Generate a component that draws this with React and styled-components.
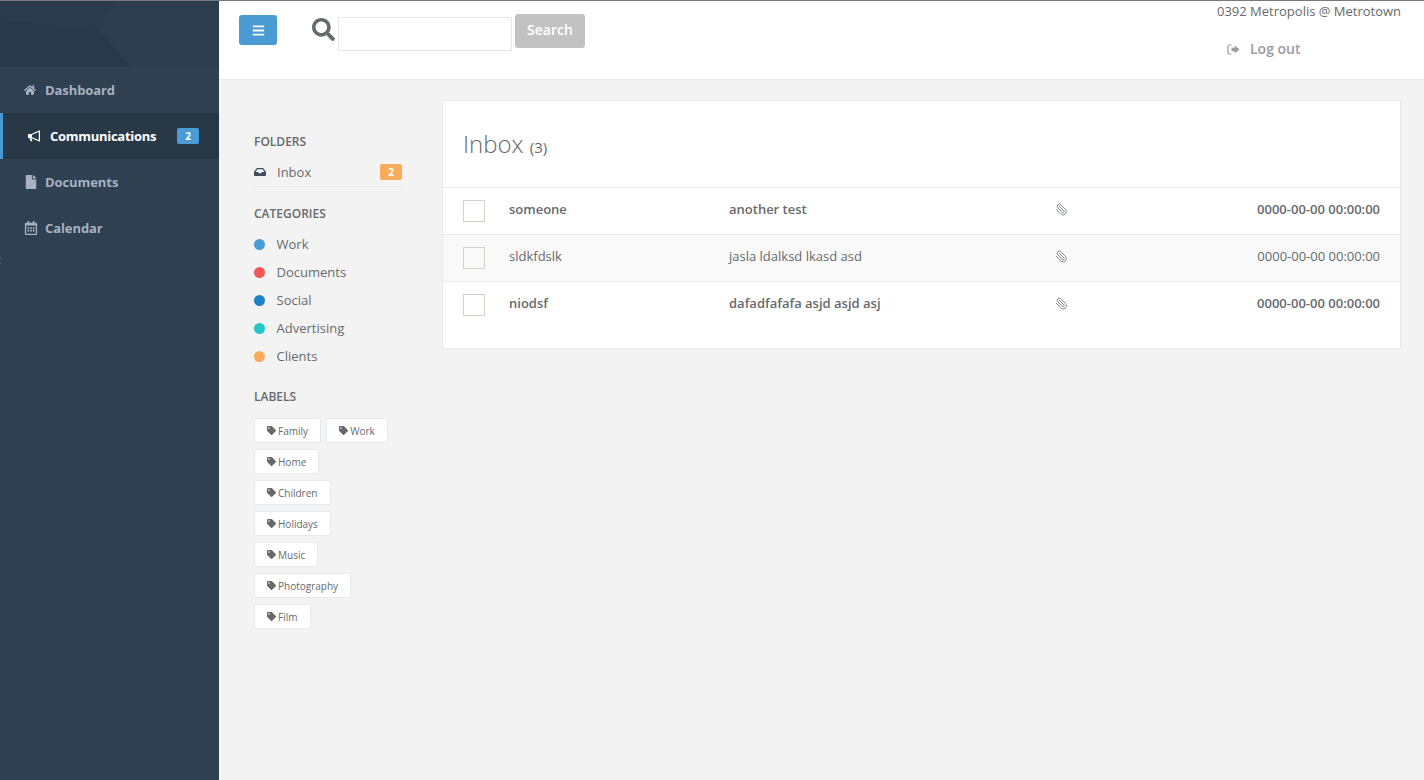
import React from "react"
import styled, { createGlobalStyle } from "styled-components"
import { FaBars, FaFile, FaHome, FaInbox, FaRegCalendarAlt, FaSearch, FaTag } from "react-icons/fa"
import { Paperclip } from "lucide-react"

const GlobalStyle = createGlobalStyle`
  html, body {
    margin: 0;
    padding: 0;
    height: 780px;
    overflow: hidden;
    background: #f3f3f3;
    font-family: "Open Sans", "Liberation Sans", sans-serif;
    color: #676a6c;
  }
  * {
    box-sizing: border-box;
  }
`

const Page = styled.div`
  display: flex;
  height: 780px;
  border-top: 1px solid #7a7a7a;
`

const Sidebar = styled.aside`
  position: relative;
  flex: 0 0 219px;
  background: #2f4050;
`

const Brand = styled.div`
  height: 66px;
  background: #293a4a;
  svg {
    display: block;
  }
`

const CollapseMark = styled.span`
  position: absolute;
  left: -2px;
  top: 257px;
  width: 5px;
  height: 5px;
  border-left: 1px solid #7e8ea0;
  border-bottom: 1px solid #7e8ea0;
  transform: rotate(45deg);
  opacity: 0.6;
`

const NavItem = styled.a`
  display: flex;
  align-items: center;
  height: 46px;
  padding-left: ${p => (p.$active ? "25px" : "24px")};
  border-left: ${p => (p.$active ? "3px solid #4a9ad4" : "0")};
  background: ${p => (p.$active ? "#293846" : "transparent")};
  color: ${p => (p.$active ? "#fff" : "#a7b1c2")};
  font-size: 13px;
  font-weight: 700;
  letter-spacing: ${p => (p.$active ? "-0.28px" : "-0.08px")};
`

const NavIcon = styled.span`
  display: flex;
  width: ${p => p.$width}px;
  font-size: ${p => p.$size}px;
  svg {
    display: block;
  }
`

const NavBadge = styled.span`
  margin-left: auto;
  margin-right: 20px;
  width: 22px;
  height: 16px;
  border-radius: 2px;
  background: #4a9ad4;
  color: #fff;
  font-size: 10px;
  line-height: 16px;
  letter-spacing: 0;
  text-align: center;
`

const Main = styled.div`
  flex: 1;
  display: flex;
  flex-direction: column;
`

const TopBar = styled.header`
  display: flex;
  height: 79px;
  background: #fff;
  border-bottom: 1px solid #e7eaec;
`

const MenuButton = styled.button`
  display: flex;
  align-items: center;
  justify-content: center;
  width: 38px;
  height: 30px;
  margin: 14px 0 0 20px;
  padding: 0;
  border: 0;
  border-radius: 3px;
  background: #4a9ad4;
  color: #fff;
  font-size: 13px;
`

const SearchForm = styled.form`
  display: flex;
  align-items: flex-start;
  margin: 13px 0 0 35px;
  color: #676a6c;
  svg {
    margin-top: 4px;
    font-size: 23px;
  }
`

const SearchInput = styled.input`
  width: 174px;
  height: 34px;
  margin: 3px 3px 0 3px;
  border: 1px solid #e5e6e7;
  background: #fff;
`

const SearchButton = styled.button`
  width: 70px;
  height: 34px;
  padding: 0 0 3px;
  border: 0;
  border-radius: 3px;
  background: #c2c2c2;
  color: #fff;
  font-family: inherit;
  font-size: 14px;
  font-weight: 600;
`

const UserBox = styled.div`
  margin-left: auto;
  display: flex;
  flex-direction: column;
  width: 207px;
`

const UserName = styled.div`
  margin-top: 1px;
  padding-right: 23px;
  font-size: 13px;
  line-height: 18px;
  text-align: right;
  white-space: nowrap;
`

const LogOut = styled.a`
  display: flex;
  align-items: center;
  gap: 10px;
  margin: 19px 0 0 10px;
  color: #999c9e;
  font-size: 14px;
  font-weight: 600;
  line-height: 20px;
`

const Content = styled.div`
  flex: 1;
  display: flex;
  align-items: flex-start;
  padding: 20px 23px 0 35px;
`

const Folders = styled.nav`
  flex: 0 0 148px;
  margin-right: 40px;
  padding-top: 34px;
`

const SectionTitle = styled.h5`
  margin: 0;
  font-size: 12px;
  font-weight: 600;
  line-height: 16px;
  text-transform: uppercase;
`

const FolderRow = styled.div`
  display: flex;
  align-items: center;
  height: 26px;
  margin: 11px 0 19px;
  border-bottom: 1px solid #e7eaec;
  padding-bottom: 3px;
  font-size: 13px;
  svg {
    margin-right: 11px;
    color: #3e4d5c;
    font-size: 12px;
  }
`

const FolderBadge = styled.span`
  margin-left: auto;
  width: 22px;
  height: 16px;
  border-radius: 2px;
  background: #f8ac59;
  color: #fff;
  font-size: 10px;
  font-weight: 700;
  line-height: 16px;
  text-align: center;
`

const CategoryList = styled.ul`
  margin: 8px 0 19px;
  padding: 0;
  list-style: none;
`

const CategoryRow = styled.li`
  display: flex;
  align-items: center;
  gap: 11.5px;
  height: 28px;
  font-size: 13px;
`

const Dot = styled.span`
  width: 11px;
  height: 11px;
  border-radius: 50%;
  background: ${p => p.$color};
`

const Tags = styled.div`
  display: flex;
  flex-direction: column;
  gap: 6px;
  margin-top: 13px;
`

const TagRow = styled.div`
  display: flex;
  gap: 5px;
`

const TagChip = styled.a`
  display: flex;
  align-items: center;
  gap: 2px;
  height: 25px;
  padding: 0 12.2px 0 12px;
  border: 1px solid #e7eaec;
  border-radius: 2px;
  background: #fff;
  font-size: 10px;
  svg {
    font-size: 9px;
  }
`

const MailBox = styled.section`
  flex: 1;
  height: 249px;
  background: #fff;
  border: 1px solid #e7eaec;
`

const MailHeader = styled.div`
  height: 87px;
  padding: 26px 20px 0;
  border-bottom: 1px solid #e7eaec;
`

const MailTitle = styled.h2`
  margin: 0;
  font-size: 24px;
  font-weight: 300;
  line-height: 34px;
  small {
    font-size: 15px;
    font-weight: 400;
    color: #676a6c;
  }
`

const MailRow = styled.div`
  display: grid;
  grid-template-columns: 22px 220px 327px 1fr 200px;
  align-items: center;
  height: 47px;
  padding: 0 20px;
  border-bottom: 1px solid ${p => (p.$last ? "transparent" : "#e7eaec")};
  background: ${p => (p.$read ? "#f9f9f9" : "#fff")};
  font-size: 13px;
  font-weight: ${p => (p.$read ? 400 : 600)};
`

const Check = styled.span`
  width: 22px;
  height: 22px;
  border: 1px solid #d5d0c9;
  background: ${p => (p.$read ? "#f9f9f9" : "#fff")};
`

const Sender = styled.span`
  padding: 0 0 5px 24px;
  margin-right: -24px;
`

const Subject = styled.span`
  padding: 0 0 5px 24px;
`

const Clip = styled.span`
  display: flex;
  padding: 0 0 4px 23px;
  color: #808486;
  svg {
    transform: scaleX(-1);
  }
`

const MailDate = styled.span`
  padding-bottom: 5px;
  text-align: right;
`

const BrandShape = () => (
  <svg width="219" height="66" viewBox="0 0 219 66">
    <polygon points="0,0 116,0 98,28 130,66 0,66" fill="#2a3b4b" />
    <polygon points="116,0 219,0 219,66 130,66 98,28" fill="#2c3d4e" />
    <polygon points="0,20 98,28 130,66 0,66" fill="#283949" />
  </svg>
)

const BullhornIcon = () => (
  <svg width="13" height="12" viewBox="0 0 13 12" fill="none">
    <path d="M0 4h4v4H0z M1.5 8h2l.8 3.2H2.5z" fill="#fff" />
    <path d="M4 4.2 11.4 1v10L4 7.8" stroke="#fff" strokeWidth="1.2" strokeLinejoin="round" />
  </svg>
)

const SignOutIcon = () => (
  <svg width="13" height="11" viewBox="0 0 13 11" fill="none">
    <path d="M4.5 1H2.2C1.5 1 1 1.5 1 2.2v6.6C1 9.5 1.5 10 2.2 10h2.3" stroke="#999c9e" strokeWidth="1.2" />
    <path d="M4.5 3.8h3.2V1.4L12.5 5.5 7.7 9.6V7.2H4.5z" fill="#999c9e" />
  </svg>
)

const navItems = [
  { label: "Dashboard", icon: <FaHome />, width: 21, size: 12 },
  { label: "Communications", icon: <BullhornIcon />, width: 22, size: 12, active: true, badge: 2 },
  { label: "Documents", icon: <FaFile />, width: 21, size: 14 },
  { label: "Calendar", icon: <FaRegCalendarAlt />, width: 21, size: 14 },
]

const categories = [
  { label: "Work", color: "#4a9ad4" },
  { label: "Documents", color: "#f15757" },
  { label: "Social", color: "#1c84c6" },
  { label: "Advertising", color: "#23c6c8" },
  { label: "Clients", color: "#f8ac59" },
]

const labels = [
  ["Family", "Work"],
  ["Home"],
  ["Children"],
  ["Holidays"],
  ["Music"],
  ["Photography"],
  ["Film"],
]

const mails = [
  { from: "someone", subject: "another test" },
  { from: "sldkfdslk", subject: "jasla ldalksd lkasd asd", read: true },
  { from: "niodsf", subject: "dafadfafafa asjd asjd asj", last: true },
]

export default function App() {
  return (
    <Page>
      <GlobalStyle />
      <Sidebar>
        <Brand>
          <BrandShape />
        </Brand>
        {navItems.map(item => (
          <NavItem key={item.label} $active={item.active}>
            <NavIcon $width={item.width} $size={item.size}>
              {item.icon}
            </NavIcon>
            {item.label}
            {item.badge && <NavBadge>{item.badge}</NavBadge>}
          </NavItem>
        ))}
        <CollapseMark />
      </Sidebar>
      <Main>
        <TopBar>
          <MenuButton aria-label="Menu">
            <FaBars />
          </MenuButton>
          <SearchForm>
            <FaSearch />
            <SearchInput />
            <SearchButton type="button">Search</SearchButton>
          </SearchForm>
          <UserBox>
            <UserName>0392 Metropolis @ Metrotown</UserName>
            <LogOut>
              <SignOutIcon />
              Log out
            </LogOut>
          </UserBox>
        </TopBar>
        <Content>
          <Folders>
            <SectionTitle>Folders</SectionTitle>
            <FolderRow>
              <FaInbox />
              Inbox
              <FolderBadge>2</FolderBadge>
            </FolderRow>
            <SectionTitle>Categories</SectionTitle>
            <CategoryList>
              {categories.map(cat => (
                <CategoryRow key={cat.label}>
                  <Dot $color={cat.color} />
                  {cat.label}
                </CategoryRow>
              ))}
            </CategoryList>
            <SectionTitle>Labels</SectionTitle>
            <Tags>
              {labels.map(group => (
                <TagRow key={group[0]}>
                  {group.map(name => (
                    <TagChip key={name}>
                      <FaTag />
                      {name}
                    </TagChip>
                  ))}
                </TagRow>
              ))}
            </Tags>
          </Folders>
          <MailBox>
            <MailHeader>
              <MailTitle>
                Inbox <small>(3)</small>
              </MailTitle>
            </MailHeader>
            {mails.map(mail => (
              <MailRow key={mail.from} $read={mail.read} $last={mail.last}>
                <Check $read={mail.read} />
                <Sender>{mail.from}</Sender>
                <Subject>{mail.subject}</Subject>
                <Clip>
                  <Paperclip size={13} strokeWidth={1.8} />
                </Clip>
                <MailDate>0000-00-00 00:00:00</MailDate>
              </MailRow>
            ))}
          </MailBox>
        </Content>
      </Main>
    </Page>
  )
}
